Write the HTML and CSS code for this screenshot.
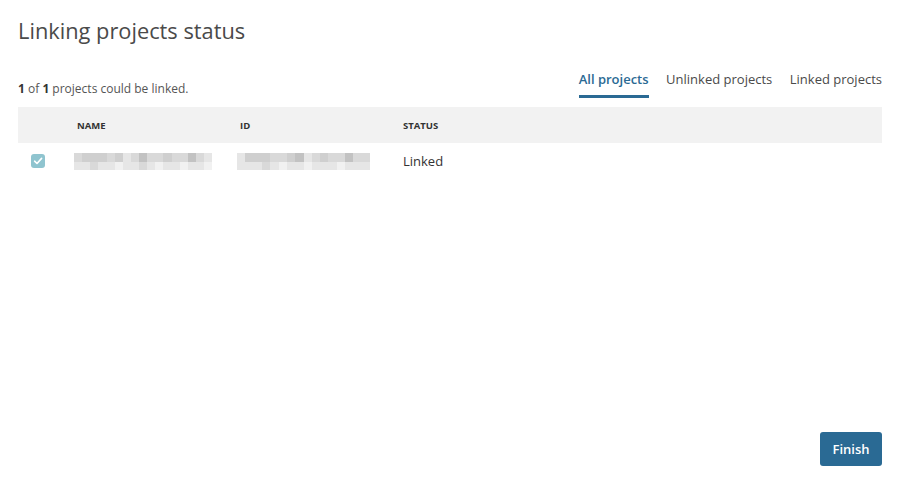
FILE: index.html
```html
<!DOCTYPE html>
<html>
<head>
<meta charset="utf-8">
<link rel="stylesheet" href="styles.css">
</head>
<body>
<div class="dialog">
  <h1 class="title">Linking projects status</h1>
  <div class="toolbar">
    <p class="summary"><b>1</b> of <b>1</b> projects could be linked.</p>
    <nav class="tabs">
      <span class="tab active">All projects</span>
      <span class="tab">Unlinked projects</span>
      <span class="tab">Linked projects</span>
    </nav>
  </div>
  <div class="table">
    <div class="thead">
      <div class="c-check"></div>
      <div class="c-name">NAME</div>
      <div class="c-id">ID</div>
      <div class="c-status">STATUS</div>
    </div>
    <div class="trow">
      <div class="c-check">
        <span class="checkbox">
          <svg width="14" height="14" viewBox="0 0 14 14"><path d="M3.6 7.2 L6 9.5 L10.6 4.4" fill="none" stroke="#fff" stroke-width="1.6" stroke-linecap="round" stroke-linejoin="round"/></svg>
        </span>
      </div>
      <div class="c-name">
        <div class="blur name-blur">
          <div class="brow top">
            <i class="s2"></i><i class="s3"></i><i class="s3"></i><i class="s3"></i><i class="s2"></i><i class="s3"></i><i class="s1"></i><i class="s2"></i><i class="s4"></i><i class="s2"></i><i class="s2"></i><i class="s3"></i><i class="s2"></i><i class="s2"></i><i class="s4"></i><i class="s2"></i><i class="s1"></i>
          </div>
          <div class="brow bot">
            <i class="s1"></i><i class="s1"></i><i class="s2"></i><i class="s1"></i><i class="s1"></i><i class="s0"></i><i class="s1"></i><i class="s1"></i><i class="s2"></i><i class="s1"></i><i class="s0"></i><i class="s1"></i><i class="s1"></i><i class="s0"></i><i class="s1"></i><i class="s1"></i><i class="s0"></i>
          </div>
        </div>
      </div>
      <div class="c-id">
        <div class="blur id-blur">
          <div class="brow top">
            <i class="s1"></i><i class="s3"></i><i class="s3"></i><i class="s3"></i><i class="s2"></i><i class="s2"></i><i class="s3"></i><i class="s4"></i><i class="s1"></i><i class="s2"></i><i class="s3"></i><i class="s2"></i><i class="s2"></i><i class="s4"></i><i class="s2"></i><i class="s2"></i>
          </div>
          <div class="brow bot">
            <i class="s1"></i><i class="s1"></i><i class="s1"></i><i class="s2"></i><i class="s1"></i><i class="s0"></i><i class="s1"></i><i class="s1"></i><i class="s0"></i><i class="s1"></i><i class="s1"></i><i class="s1"></i><i class="s0"></i><i class="s1"></i><i class="s1"></i><i class="s1"></i>
          </div>
        </div>
      </div>
      <div class="c-status">Linked</div>
    </div>
  </div>
  <div class="footer">
    <button class="btn-primary">Finish</button>
  </div>
</div>
</body>
</html>
```

FILE: styles.css
```css
* { box-sizing: border-box; }
html, body { margin: 0; padding: 0; background: #fff; }
body {
  font-family: "Open Sans", "Noto Sans", sans-serif;
  color: #333;
}
.dialog {
  height: 484px;
  padding: 0 18px 18px 18px;
  display: flex;
  flex-direction: column;
}
.title {
  margin: 16px 0 0 0;
  font-size: 21.8px;
  line-height: 30px;
  font-weight: 400;
  color: #4a4a4a;
}
.toolbar {
  margin-top: 24px;
  display: flex;
  justify-content: space-between;
  align-items: flex-end;
  height: 28px;
}
.summary {
  margin: 0 0 1px 0;
  font-size: 12px;
  line-height: 16px;
  color: #555;
}
.summary b { font-weight: 700; color: #333; }
.tabs {
  display: flex;
  gap: 17.5px;
  height: 28px;
}
.tab {
  font-size: 13px;
  line-height: 18px;
  color: #4a4a4a;
  border-bottom: 3px solid transparent;
  height: 28px;
}
.tab.active {
  color: #2a6a94;
  font-weight: 600;
  border-bottom-color: #2a6a94;
}
.table { margin-top: 9px; }
.thead, .trow {
  display: flex;
  align-items: center;
  height: 36px;
}
.thead {
  background: #f2f2f2;
  font-size: 9.5px;
  font-weight: 700;
  color: #333;
}
.trow { font-size: 13px; color: #333; }
.c-check { width: 59px; padding-left: 13px; display: flex; align-items: center; }
.c-name { width: 163px; }
.c-id { width: 163px; }
.c-status { flex: 1; }
.thead .c-name, .thead .c-id, .thead .c-status { padding-top: 1px; }
.trow .c-name { margin-left: -3px; width: 166px; }
.checkbox {
  width: 14px;
  height: 14px;
  border-radius: 3px;
  background: #8fc4cf;
  display: flex;
}
.blur {
  display: flex;
  flex-direction: column;
  filter: blur(0.6px);
}
.name-blur { width: 138px; }
.id-blur { width: 133px; margin-left: -3px; }
.brow { display: flex; height: 9px; }
.brow i { flex: 1; display: block; }
.brow.bot { height: 8px; }
.s0 { background: #f1f1f1; }
.s1 { background: #e6e6e6; }
.s2 { background: #d9d9d9; }
.s3 { background: #cfcfcf; }
.s4 { background: #c2c2c2; }
.footer {
  margin-top: auto;
  display: flex;
  justify-content: flex-end;
}
.btn-primary {
  font-family: "Open Sans", "Noto Sans", sans-serif;
  font-size: 13px;
  font-weight: 600;
  color: #fff;
  background: #2a6a94;
  border: none;
  border-radius: 3px;
  width: 62px;
  height: 34px;
  padding: 0;
}
```
